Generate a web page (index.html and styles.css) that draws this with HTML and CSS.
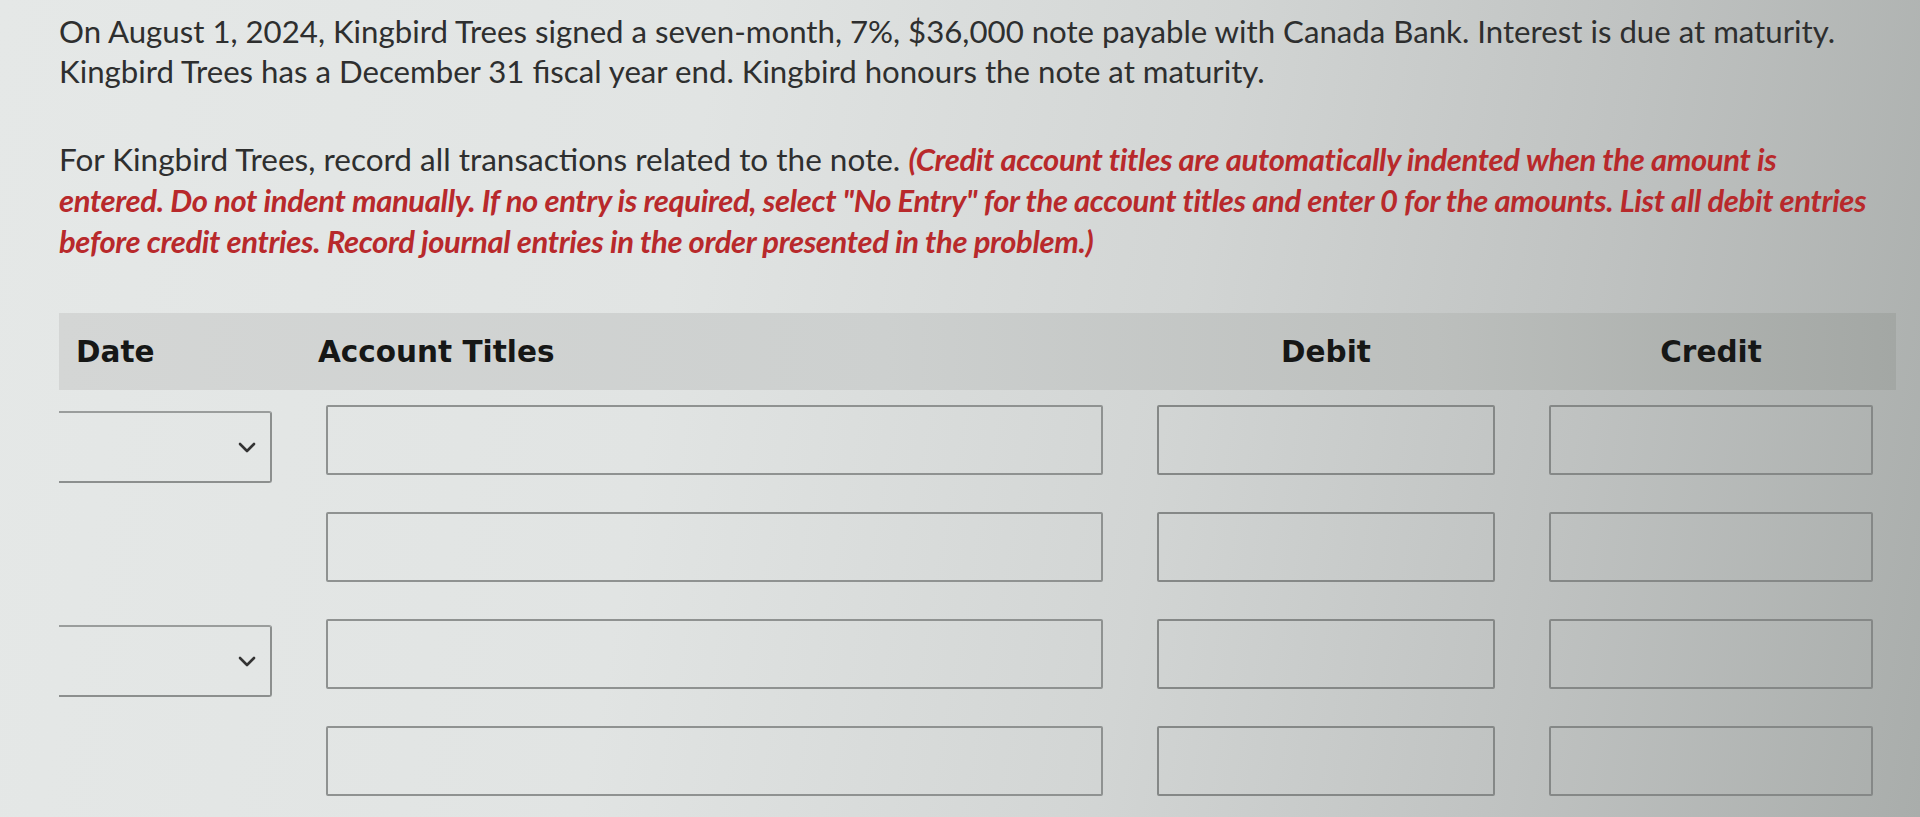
FILE: index.html
```html
<!DOCTYPE html>
<html lang="en">
<head>
<meta charset="utf-8">
<title>Journal entry</title>
<link rel="stylesheet" href="styles.css">
</head>
<body>
<div class="page">
  <p class="intro">On August 1, 2024, Kingbird Trees signed a seven-month, 7%, $36,000 note payable with Canada Bank. Interest is due at maturity.<br>Kingbird Trees has a December 31 fiscal year end. Kingbird honours the note at maturity.</p>
  <p class="instr">For Kingbird Trees, record all transactions related to the note. <em class="warn">(Credit account titles are automatically indented when the amount is<br>entered. Do not indent manually. If no entry is required, select "No Entry" for the account titles and enter 0 for the amounts. List all debit entries<br>before credit entries. Record journal entries in the order presented in the problem.)</em></p>

  <div class="journal">
    <div class="head">
      <div class="h h-date">Date</div>
      <div class="h h-acct">Account Titles</div>
      <div class="h h-num">Debit</div>
      <div class="h h-num">Credit</div>
    </div>
    <div class="rows">
      <div class="sel"><svg class="chev" viewBox="0 0 18 11" width="18" height="11"><path d="M2 2 L9 9 L16 2" fill="none" stroke="#333" stroke-width="2.6" stroke-linecap="round" stroke-linejoin="round"/></svg></div>
      <div class="box acct"></div>
      <div class="box"></div>
      <div class="box"></div>

      <div class="empty"></div>
      <div class="box acct"></div>
      <div class="box"></div>
      <div class="box"></div>

      <div class="sel"><svg class="chev" viewBox="0 0 18 11" width="18" height="11"><path d="M2 2 L9 9 L16 2" fill="none" stroke="#333" stroke-width="2.6" stroke-linecap="round" stroke-linejoin="round"/></svg></div>
      <div class="box acct"></div>
      <div class="box"></div>
      <div class="box"></div>

      <div class="empty"></div>
      <div class="box acct"></div>
      <div class="box"></div>
      <div class="box"></div>
    </div>
  </div>
</div>
</body>
</html>
```
FILE: styles.css
```css
html, body {
  margin: 0;
  padding: 0;
  height: 100%;
}
body {
  background: linear-gradient(100deg, #e5e8e7 0%, #e1e4e3 35%, #d2d5d4 60%, #bfc2c1 80%, #a9adab 100%);
  font-family: Lato, "Noto Sans", sans-serif;
  color: #2e2f2f;
  overflow: hidden;
}
.page {
  padding: 11px 0 0 59px;
}
.intro {
  margin: 0;
  white-space: nowrap;
  font-size: 31.2px;
  line-height: 40px;
}
.instr {
  margin: 48px 0 0;
  white-space: nowrap;
  font-size: 31.5px;
  line-height: 41px;
}
.warn {
  color: #b8292b;
  font-weight: 700;
  font-style: italic;
  font-size: 31px;
  letter-spacing: -0.35px;
}
.journal {
  margin-top: 51px;
  width: 1837px;
}
.head {
  height: 77px;
  display: grid;
  grid-template-columns: 213px 777px 338px 324px;
  column-gap: 54px;
  align-items: center;
  background: linear-gradient(90deg, #d4d6d5 0%, #cdd0cf 45%, #bcbfbd 75%, #a3a7a4 100%);
  font-family: "DejaVu Sans", Verdana, sans-serif;
  font-weight: 700;
  font-size: 29.5px;
  color: #161716;
}
.h-date { padding-left: 17px; }
.h-acct { margin-left: -8px; }
.h-num { text-align: center; }
.rows {
  margin-top: 15px;
  display: grid;
  grid-template-columns: 213px 777px 338px 324px;
  grid-auto-rows: 70px;
  column-gap: 54px;
  row-gap: 37px;
}
.box {
  border: 2px solid #858887;
  border-radius: 2px;
}
.acct {
  border-color: #8f9291;
}
.sel {
  align-self: start;
  height: 68px;
  margin-top: 6px;
  border-top: 2px solid #9a9d9c;
  border-bottom: 2px solid #8c8f8e;
  border-right: 2px solid #8c8f8e;
  border-radius: 0 3px 3px 0;
  display: flex;
  align-items: center;
  justify-content: flex-end;
  padding-right: 14px;
}
.chev {
  display: block;
}
```
